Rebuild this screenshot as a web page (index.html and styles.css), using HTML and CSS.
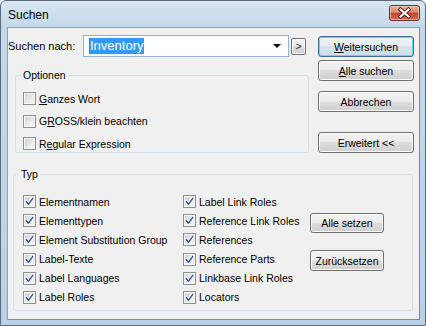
FILE: index.html
```html
<!DOCTYPE html>
<html lang="de">
<head>
<meta charset="utf-8">
<title>Suchen</title>
<link rel="stylesheet" href="styles.css">
</head>
<body>
<svg class="defs" width="0" height="0" aria-hidden="true">
  <symbol id="chk" viewBox="0 0 11 11">
    <path d="M2.2 5.6 L4.4 8.2 L8.8 2.4" fill="none" stroke="#ffffff" stroke-width="2.8" stroke-linecap="round" stroke-linejoin="round"/>
    <path d="M2.2 5.6 L4.4 8.2 L8.8 2.4" fill="none" stroke="#3a5595" stroke-width="1.5" stroke-linecap="round" stroke-linejoin="round"/>
  </symbol>
</svg>
<div class="window">
  <div class="titlebar">
    <span class="title">Suchen</span>
    <span class="close">
      <svg width="31" height="16" viewBox="0 0 31 16">
        <path d="M11.5 4.5 L19.5 11.5 M19.5 4.5 L11.5 11.5" stroke="#5a1c16" stroke-width="4" stroke-linecap="square"/>
        <path d="M11.5 4.5 L19.5 11.5 M19.5 4.5 L11.5 11.5" stroke="#ffffff" stroke-width="2.2" stroke-linecap="square"/>
      </svg>
    </span>
  </div>
  <div class="client">
    <div class="top">
      <div class="left">
        <div class="search-row">
          <span class="search-label">Suchen nach:</span>
          <div class="combo"><span class="sel">Inventory</span><span class="arrow"></span></div>
          <div class="btn mini">&gt;</div>
        </div>
        <fieldset class="group opts">
          <legend>Optionen</legend>
          <div class="opt-list">
            <div class="cb-row"><span class="cb"></span><span><u>G</u>anzes Wort</span></div>
            <div class="cb-row"><span class="cb"></span><span>G<u>R</u>OSS/klein beachten</span></div>
            <div class="cb-row"><span class="cb"></span><span>R<u>e</u>gular Expression</span></div>
          </div>
        </fieldset>
      </div>
      <div class="actions">
        <div class="btn default"><span><u>W</u>eitersuchen</span></div>
        <div class="btn a2"><span><u>A</u>lle suchen</span></div>
        <div class="btn a3">Abbrechen</div>
        <div class="btn a4">Erweitert &lt;&lt;</div>
      </div>
    </div>
    <fieldset class="group typ">
      <legend>Typ</legend>
      <div class="typ-grid">
        <div class="col col1">
          <div class="cb-row"><span class="cb"><svg><use href="#chk"/></svg></span><span>Elementnamen</span></div>
          <div class="cb-row"><span class="cb"><svg><use href="#chk"/></svg></span><span>Elementtypen</span></div>
          <div class="cb-row"><span class="cb"><svg><use href="#chk"/></svg></span><span>Element Substitution Group</span></div>
          <div class="cb-row"><span class="cb"><svg><use href="#chk"/></svg></span><span>Label-Texte</span></div>
          <div class="cb-row"><span class="cb"><svg><use href="#chk"/></svg></span><span>Label Languages</span></div>
          <div class="cb-row"><span class="cb"><svg><use href="#chk"/></svg></span><span>Label Roles</span></div>
        </div>
        <div class="col col2">
          <div class="cb-row"><span class="cb"><svg><use href="#chk"/></svg></span><span>Label Link Roles</span></div>
          <div class="cb-row"><span class="cb"><svg><use href="#chk"/></svg></span><span>Reference Link Roles</span></div>
          <div class="cb-row"><span class="cb"><svg><use href="#chk"/></svg></span><span>References</span></div>
          <div class="cb-row"><span class="cb"><svg><use href="#chk"/></svg></span><span>Reference Parts</span></div>
          <div class="cb-row"><span class="cb"><svg><use href="#chk"/></svg></span><span>Linkbase Link Roles</span></div>
          <div class="cb-row"><span class="cb"><svg><use href="#chk"/></svg></span><span>Locators</span></div>
        </div>
        <div class="typ-btns">
          <div class="btn t1">Alle setzen</div>
          <div class="btn t2">Zurücksetzen</div>
        </div>
      </div>
    </fieldset>
  </div>
</div>
</body>
</html>
```
FILE: styles.css
```css
* { box-sizing: border-box; }
body {
  margin: 0;
  background: #ffffff;
  font-family: "Liberation Sans", Arial, sans-serif;
  font-size: 10.5px;
  color: #000;
}
.defs { position: absolute; }
.window {
  width: 426px;
  height: 326px;
  border: 1px solid #5d6b79;
  border-radius: 6px 6px 0 0;
  background: linear-gradient(#d9e7f3, #c3d8ea 26px, #b9d1e7);
  display: flex;
  flex-direction: column;
  padding: 0 5px 5px 6px;
}
.titlebar {
  height: 26px;
  display: flex;
  align-items: center;
  justify-content: space-between;
}
.title {
  font-size: 12px;
  margin-left: 1px;
  margin-top: 1px;
}
.close {
  align-self: flex-start;
  margin-top: 4px;
  width: 31px;
  height: 16px;
  border: 1px solid #6b2d29;
  border-radius: 3px;
  background: linear-gradient(#eab0a2, #d98571 45%, #c2462f 50%, #cf6a4e);
  box-shadow: inset 0 0 0 1px rgba(255, 220, 210, 0.6);
  display: flex;
  align-items: center;
  justify-content: center;
}
.close svg { display: block; margin: -1px; }
.client {
  flex: 1;
  border: 1px solid;
  border-color: #8aa0b5 #2ea8d8 #2ea8d8 #8aa0b5;
  background: #f0f0f0;
}
.top { display: flex; }
.left { width: 301px; padding-top: 7px; }
.search-row {
  display: flex;
  align-items: center;
  height: 22px;
}
.search-label { width: 75px; font-size: 11px; }
.combo {
  width: 206px;
  height: 22px;
  border: 1px solid #8fb4d7;
  background: #ffffff;
  display: flex;
  align-items: center;
  padding-left: 5px;
}
.sel {
  background: #3399ff;
  color: #ffffff;
  font-size: 13px;
  line-height: 16px;
  height: 16px;
  padding-right: 1px;
  border-left: 1px solid #c86a00;
}
.arrow {
  margin-left: auto;
  margin-right: 7px;
  width: 0;
  height: 0;
  border-left: 4px solid transparent;
  border-right: 4px solid transparent;
  border-top: 4px solid #000;
}
.btn {
  display: flex;
  align-items: center;
  justify-content: center;
  height: 21px;
  border: 1px solid #707070;
  border-radius: 3px;
  background: linear-gradient(#f2f2f2, #ebebeb 50%, #dddddd 50%, #cfcfcf);
  box-shadow: inset 0 0 0 1px #fbfbfb;
  font-size: 10.5px;
  white-space: nowrap;
}
.btn.mini {
  width: 15px;
  height: 17px;
  margin-left: 2px;
  border-radius: 2px;
  color: #1d2e5a;
}
.btn.default {
  border-color: #3c6f95;
  box-shadow: inset 0 0 0 1px #63d3f6;
  background: linear-gradient(#eef4f8, #e3ecf2 50%, #d7e3ea 50%, #cddde7);
}
.group {
  margin: 0;
  border: 1px solid #d5dfe5;
  border-radius: 3px;
  min-width: 0;
}
.group legend {
  font-size: 10.5px;
  line-height: 13px;
  padding: 0 2px;
}
.opts {
  margin: 12px 0 0 7px;
  width: 294px;
  padding: 10px 0 2px 7px;
}
.opts legend { margin-left: -2px; }
.opt-list {
  display: flex;
  flex-direction: column;
  gap: 9.5px;
}
.cb-row {
  display: flex;
  align-items: center;
  gap: 3px;
  height: 13px;
  white-space: nowrap;
}
.cb {
  flex: none;
  width: 13px;
  height: 13px;
  border: 1px solid #8f8f8f;
  background: linear-gradient(135deg, #cdd0d4, #eef0f2 70%, #f7f7f7);
  box-shadow: inset 0 0 0 1px #f6f6f6;
}
.cb svg { display: block; width: 11px; height: 11px; }
.actions {
  margin-left: 9px;
  width: 96px;
  padding-top: 8px;
  display: flex;
  flex-direction: column;
}
.a2 { margin-top: 3px; }
.a3 { margin-top: 10px; }
.a4 { margin-top: 20px; }
.typ {
  margin: 15px 0 0 5px;
  width: 400px;
  padding: 14px 0 6px 9px;
}
.typ legend { margin-left: -4px; }
.typ-grid { display: flex; }
.col {
  display: flex;
  flex-direction: column;
  gap: 6.2px;
}
.col1 { width: 160px; }
.col2 { width: 127px; }
.typ-btns {
  width: 74px;
  display: flex;
  flex-direction: column;
}
.t1 { margin-top: 18px; height: 20px; }
.t2 { margin-top: 17px; }
```
